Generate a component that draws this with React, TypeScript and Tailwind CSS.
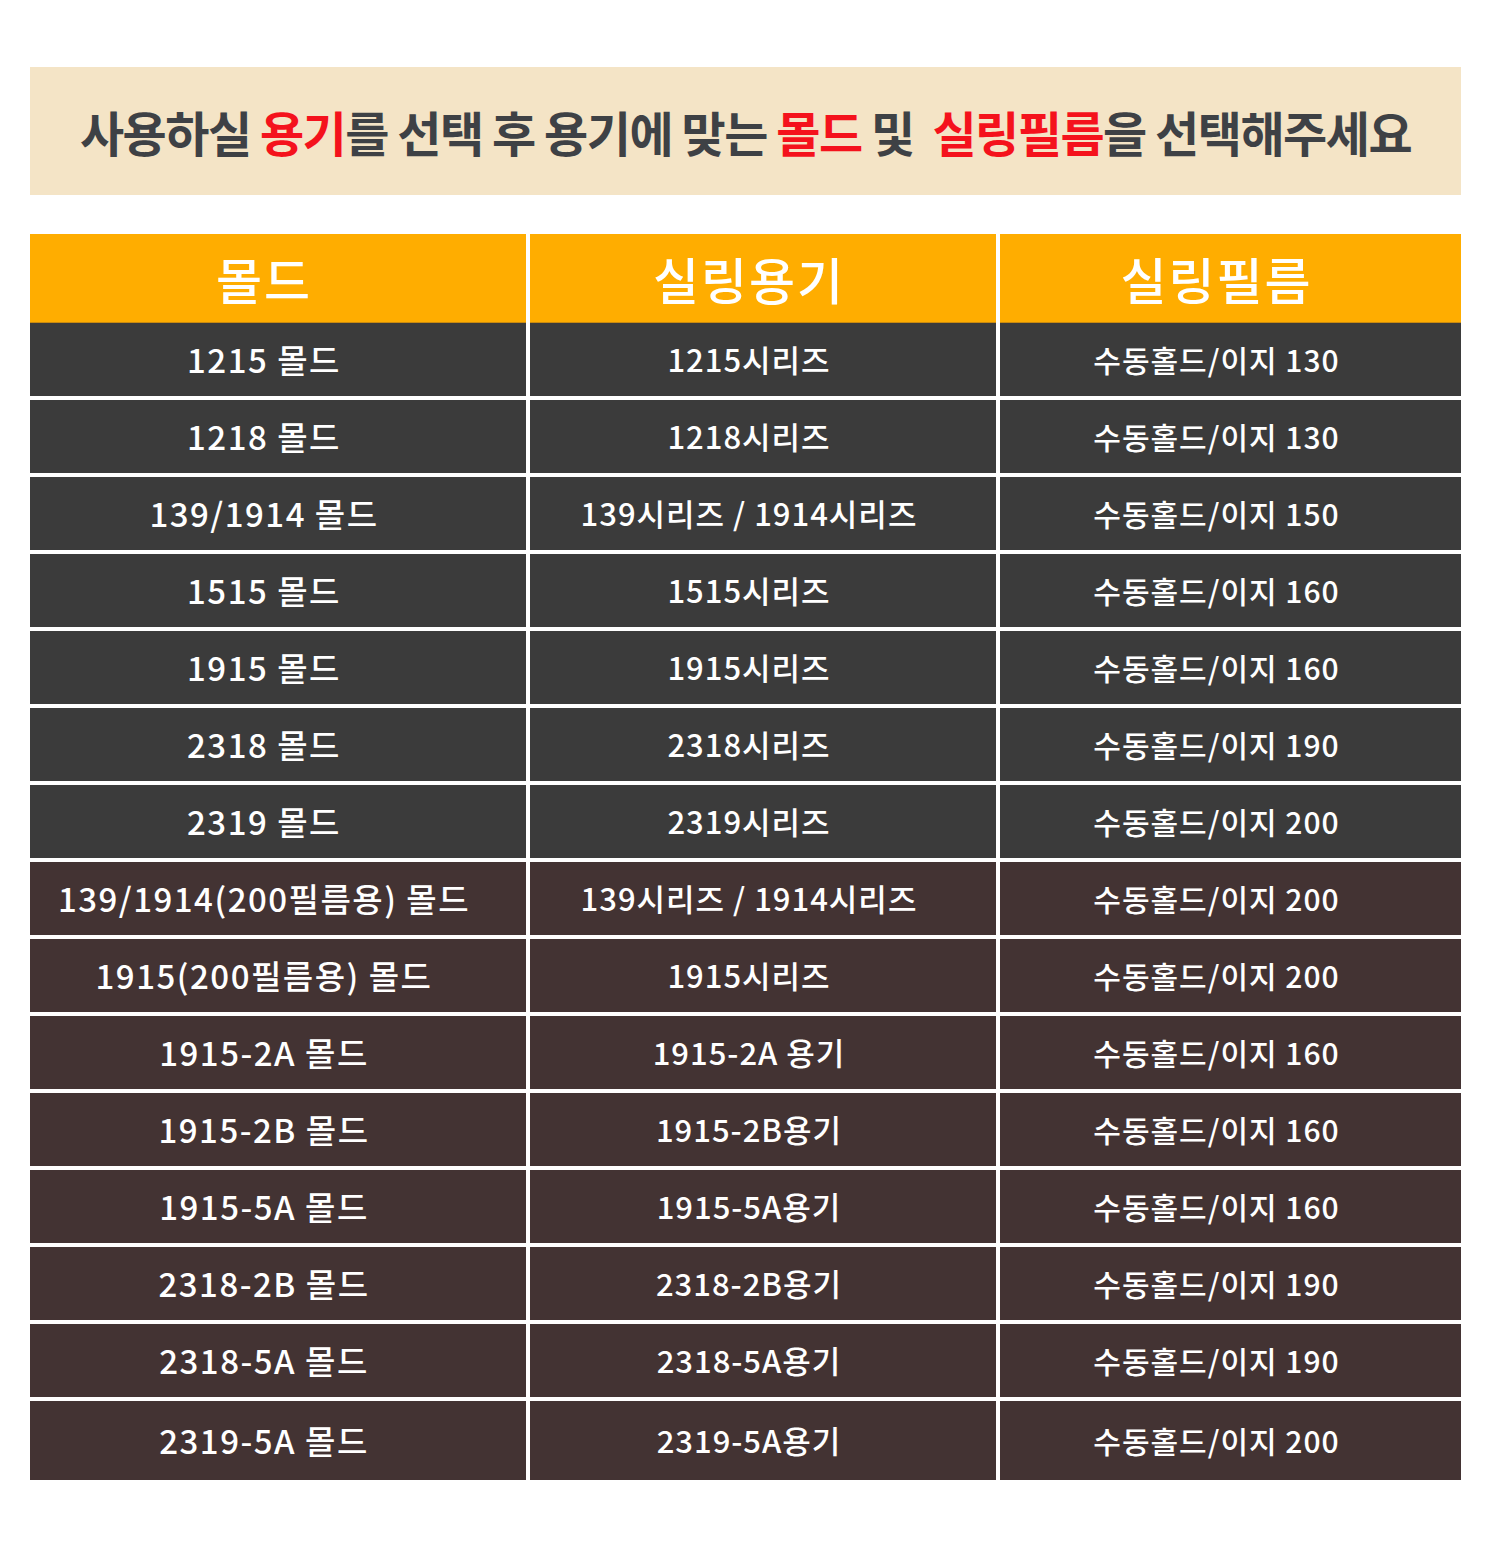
const rows: { mold: string; cont: string; film: string; brown?: boolean }[] = [
  { mold: '1215 몰드', cont: '1215시리즈', film: '수동홀드/이지 130' },
  { mold: '1218 몰드', cont: '1218시리즈', film: '수동홀드/이지 130' },
  { mold: '139/1914 몰드', cont: '139시리즈 / 1914시리즈', film: '수동홀드/이지 150' },
  { mold: '1515 몰드', cont: '1515시리즈', film: '수동홀드/이지 160' },
  { mold: '1915 몰드', cont: '1915시리즈', film: '수동홀드/이지 160' },
  { mold: '2318 몰드', cont: '2318시리즈', film: '수동홀드/이지 190' },
  { mold: '2319 몰드', cont: '2319시리즈', film: '수동홀드/이지 200' },
  { mold: '139/1914(200필름용) 몰드', cont: '139시리즈 / 1914시리즈', film: '수동홀드/이지 200', brown: true },
  { mold: '1915(200필름용) 몰드', cont: '1915시리즈', film: '수동홀드/이지 200', brown: true },
  { mold: '1915-2A 몰드', cont: '1915-2A 용기', film: '수동홀드/이지 160', brown: true },
  { mold: '1915-2B 몰드', cont: '1915-2B용기', film: '수동홀드/이지 160', brown: true },
  { mold: '1915-5A 몰드', cont: '1915-5A용기', film: '수동홀드/이지 160', brown: true },
  { mold: '2318-2B 몰드', cont: '2318-2B용기', film: '수동홀드/이지 190', brown: true },
  { mold: '2318-5A 몰드', cont: '2318-5A용기', film: '수동홀드/이지 190', brown: true },
  { mold: '2319-5A 몰드', cont: '2319-5A용기', film: '수동홀드/이지 200', brown: true },
];

const colText = [
  'text-[33px] tracking-[1.5px]',
  'text-[31px] tracking-[1px]',
  'text-[30px] tracking-[1px]',
];

export default function App() {
  return (
    <div
      className="w-[1496px] h-[1554px] bg-white pt-[67px] pl-[30px] pr-[35px]"
      style={{ fontFamily: '"Noto Sans CJK KR", "Noto Sans", sans-serif' }}
    >
      {/* Banner */}
      <div className="h-[128px] bg-[#f4e4c6] flex items-center justify-center">
        <h1 className="text-[48px] font-bold text-[#3e4145] tracking-[-1.5px] whitespace-pre">
          사용하실 <span className="text-[#f4121c]">용기</span>를 선택 후 용기에 맞는{' '}
          <span className="text-[#f4121c]">몰드</span> 및  <span className="text-[#f4121c]">실링필름</span>을 선택해주세요
        </h1>
      </div>

      {/* Table */}
      <div className="mt-[39px] grid grid-cols-[496px_466px_1fr] gap-x-[4px] gap-y-[4px] text-white">
        <div className="col-span-3 grid grid-cols-[496px_466px_1fr] gap-x-[4px] -mb-[4px]">
          {['몰드', '실링용기', '실링필름'].map((h) => (
            <div
              key={h}
              className="h-[89px] bg-[#ffad00] border-b border-[#c98a10] flex items-center justify-center pr-[28px] text-[50px] font-medium tracking-[2px]"
            >
              {h}
            </div>
          ))}
        </div>
        {rows.map((r, i) => {
          const bg = r.brown ? 'bg-[#433333]' : 'bg-[#3b3b3b]';
          const h = i === rows.length - 1 ? 'h-[79px]' : 'h-[73px]';
          return [r.mold, r.cont, r.film].map((t, j) => (
            <div
              key={`${i}-${j}`}
              className={`${bg} ${h} ${colText[j]} flex items-center justify-center pr-[28px] font-medium`}
            >
              {t}
            </div>
          ));
        })}
      </div>
    </div>
  );
}
